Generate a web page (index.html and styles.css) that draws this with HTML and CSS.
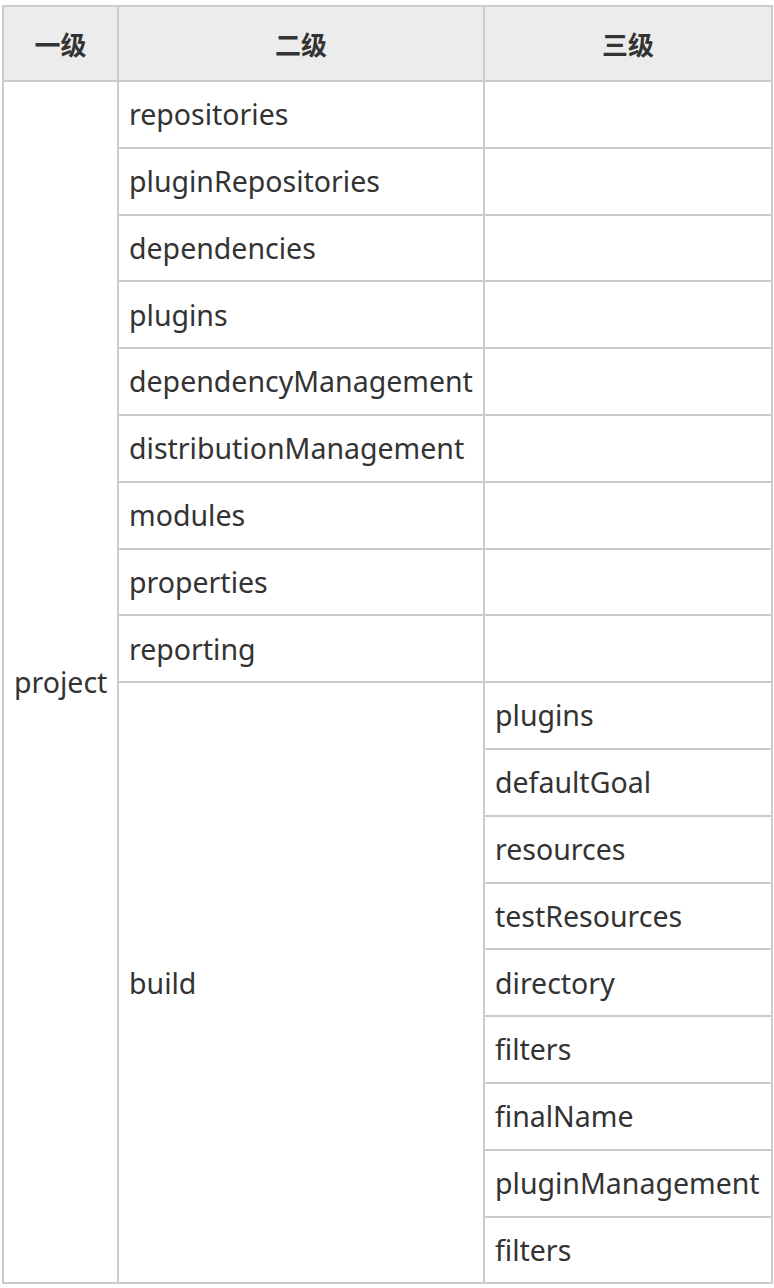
FILE: index.html
```html
<!DOCTYPE html>
<html lang="zh">
<head>
<meta charset="utf-8">
<link rel="stylesheet" href="styles.css">
</head>
<body>
<table class="pom">
  <colgroup>
    <col class="c1">
    <col class="c2">
    <col class="c3">
  </colgroup>
  <thead>
    <tr><th>一级</th><th>二级</th><th>三级</th></tr>
  </thead>
  <tbody>
    <tr><td rowspan="18">project</td><td>repositories</td><td></td></tr>
    <tr><td>pluginRepositories</td><td></td></tr>
    <tr><td>dependencies</td><td></td></tr>
    <tr><td>plugins</td><td></td></tr>
    <tr><td>dependencyManagement</td><td></td></tr>
    <tr><td>distributionManagement</td><td></td></tr>
    <tr><td>modules</td><td></td></tr>
    <tr><td>properties</td><td></td></tr>
    <tr><td>reporting</td><td></td></tr>
    <tr><td rowspan="9">build</td><td>plugins</td></tr>
    <tr><td>defaultGoal</td></tr>
    <tr><td>resources</td></tr>
    <tr><td>testResources</td></tr>
    <tr><td>directory</td></tr>
    <tr><td>filters</td></tr>
    <tr><td>finalName</td></tr>
    <tr><td>pluginManagement</td></tr>
    <tr><td>filters</td></tr>
  </tbody>
</table>
</body>
</html>
```
FILE: styles.css
```css
html, body {
  margin: 0;
  padding: 0;
  background: #ffffff;
}
body {
  padding: 5px 2px 0 2px;
  font-family: "Noto Sans", "Noto Sans CJK SC", sans-serif;
  color: #333333;
}
.pom {
  border-collapse: collapse;
  table-layout: fixed;
  width: 769px;
  font-size: 28.5px;
  line-height: 1.2;
}
.c1 { width: 115px; }
.c2 { width: 366px; }
.c3 { width: 288px; }
.pom th, .pom td {
  border: 2px solid #cccccc;
  padding: 0 10px;
  height: 64.8px;
  text-align: left;
  vertical-align: middle;
  white-space: nowrap;
}
.pom th {
  height: 73px;
  background: #ececec;
  text-align: center;
  font-weight: bold;
  font-size: 26px;
  font-family: "Noto Sans CJK SC", sans-serif;
}
```
